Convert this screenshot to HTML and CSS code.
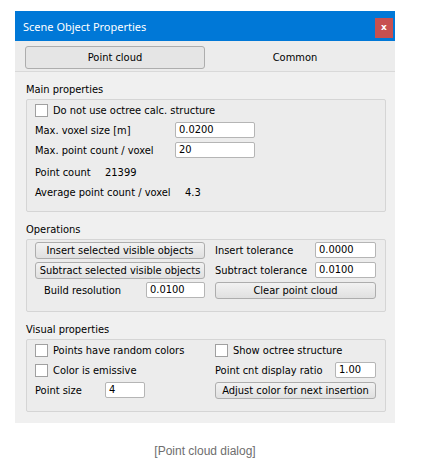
FILE: index.html
```html
<!DOCTYPE html>
<html>
<head>
<meta charset="utf-8">
<link rel="stylesheet" href="styles.css">
</head>
<body>
<div class="dialog">
  <div class="titlebar">
    <span class="title">Scene Object Properties</span>
    <span class="close">x</span>
  </div>
  <div class="tabs">
    <div class="tab active">Point cloud</div>
    <div class="tab">Common</div>
  </div>
  <div class="content">
    <div class="section-label">Main properties</div>
    <div class="group main">
      <div class="row"><span class="check"></span><span>Do not use octree calc. structure</span></div>
      <div class="row"><span class="lbl w140">Max. voxel size [m]</span><span class="input w80">0.0200</span></div>
      <div class="row"><span class="lbl w140">Max. point count / voxel</span><span class="input w80">20</span></div>
      <div class="row gap-top"><span class="lbl w70">Point count</span><span>21399</span></div>
      <div class="row"><span class="lbl w150">Average point count / voxel</span><span>4.3</span></div>
    </div>

    <div class="section-label">Operations</div>
    <div class="group grid">
      <div class="cell"><span class="button wide">Insert selected visible objects</span></div>
      <div class="cell"><span class="lbl w100">Insert tolerance</span><span class="input w61">0.0000</span></div>
      <div class="cell"><span class="button wide">Subtract selected visible objects</span></div>
      <div class="cell"><span class="lbl w100">Subtract tolerance</span><span class="input w61">0.0100</span></div>
      <div class="cell split"><span class="lbl indent">Build resolution</span><span class="input w59">0.0100</span></div>
      <div class="cell"><span class="button wide">Clear point cloud</span></div>
    </div>

    <div class="section-label">Visual properties</div>
    <div class="group grid">
      <div class="cell"><span class="check"></span><span>Points have random colors</span></div>
      <div class="cell"><span class="check"></span><span>Show octree structure</span></div>
      <div class="cell"><span class="check"></span><span>Color is emissive</span></div>
      <div class="cell"><span class="lbl w120">Point cnt display ratio</span><span class="input w41">1.00</span></div>
      <div class="cell"><span class="lbl w70">Point size</span><span class="input w40">4</span></div>
      <div class="cell"><span class="button wide">Adjust color for next insertion</span></div>
    </div>
  </div>
</div>
<div class="caption">[Point cloud dialog]</div>
</body>
</html>
```
FILE: styles.css
```css
html, body {
  margin: 0;
  padding: 0;
  background: #ffffff;
}
body {
  font-family: "DejaVu Sans Condensed", "Liberation Sans", sans-serif;
  font-size: 11px;
  color: #000;
}
.dialog {
  margin: 11px 0 0 15px;
  width: 380px;
  background: #f0f0f0;
}
.titlebar {
  height: 30px;
  background: #0078d7;
  display: flex;
  align-items: center;
  justify-content: space-between;
  padding-left: 8px;
  box-sizing: border-box;
}
.title {
  font-family: "Noto Sans", "Liberation Sans", sans-serif;
  font-size: 11px;
  color: #fff;
}
.close {
  align-self: flex-start;
  margin-top: 7px;
  margin-right: 2px;
  width: 18px;
  height: 20px;
  background: #c75050;
  color: #fff;
  font-family: "DejaVu Sans", sans-serif;
  font-weight: bold;
  font-size: 9px;
  line-height: 19px;
  text-align: center;
}
.tabs {
  background: #ececec;
  border-bottom: 1px solid #d9d9d9;
  display: flex;
  padding: 5px 10px 0 10px;
  height: 25px;
}
.tab {
  width: 180px;
  height: 23px;
  line-height: 23px;
  text-align: center;
  font-size: 11px;
  box-sizing: border-box;
}
.tab.active {
  background: #e5e5e5;
  border: 1px solid #adadad;
  border-radius: 3px;
  line-height: 21px;
}
.content {
  padding: 0 9px 11px 11px;
}
.section-label {
  margin-top: 8px;
  height: 19px;
  line-height: 19px;
}
.group {
  border: 1px solid #d5d5d5;
  border-radius: 2px;
  background: #ececec;
  padding: 0 0 11px 8px;
}
.group.main {
  padding-bottom: 9px;
}
.row {
  height: 20px;
  display: flex;
  align-items: center;
}
.row.gap-top {
  margin-top: 2px;
}
.grid {
  display: grid;
  grid-template-columns: 170px 161px;
  grid-auto-rows: 20px;
  column-gap: 10px;
}
.cell {
  display: flex;
  align-items: center;
}
.cell.split {
  justify-content: space-between;
}
.check {
  width: 13px;
  height: 13px;
  box-sizing: border-box;
  background: #fff;
  border: 1px solid #a0a0a0;
  margin-right: 5px;
  flex: none;
}
.lbl { flex: none; }
.indent { padding-left: 9px; }
.w70 { width: 70px; }
.w100 { width: 100px; }
.w120 { width: 120px; }
.w140 { width: 140px; }
.w150 { width: 150px; }
.input {
  height: 16px;
  line-height: 14px;
  box-sizing: border-box;
  background: #fff;
  border: 1px solid #b5b5b5;
  border-radius: 2px;
  padding-left: 3px;
  flex: none;
}
.w80 { width: 80px; }
.w61 { width: 61px; }
.w59 { width: 59px; }
.w41 { width: 41px; }
.w40 { width: 40px; }
.button {
  height: 17px;
  line-height: 15px;
  box-sizing: border-box;
  background: linear-gradient(#f2f2f2, #e0e0e0);
  border: 1px solid #adadad;
  border-radius: 3px;
  text-align: center;
  font-size: 11px;
  white-space: nowrap;
}
.button.wide { width: 100%; }
.caption {
  width: 380px;
  margin-left: 15px;
  margin-top: 21px;
  text-align: center;
  font-family: "Liberation Sans", Arial, sans-serif;
  font-size: 12px;
  color: #6e6e6e;
}
```
